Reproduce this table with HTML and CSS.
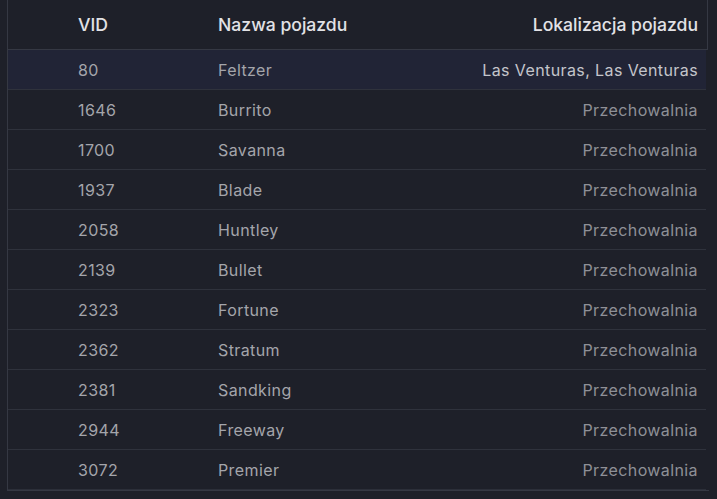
FILE: index.html
```html
<!DOCTYPE html>
<html lang="pl">
<head>
<meta charset="utf-8">
<title>Pojazdy</title>
<link rel="stylesheet" href="styles.css">
</head>
<body>
<div class="table">
  <div class="row head">
    <div class="c-vid">VID</div>
    <div class="c-name">Nazwa pojazdu</div>
    <div class="c-loc">Lokalizacja pojazdu</div>
  </div>
  <div class="body">
    <div class="row hover"><div class="c-vid">80</div><div class="c-name">Feltzer</div><div class="c-loc bright">Las Venturas, Las Venturas</div></div>
    <div class="row"><div class="c-vid">1646</div><div class="c-name">Burrito</div><div class="c-loc">Przechowalnia</div></div>
    <div class="row"><div class="c-vid">1700</div><div class="c-name">Savanna</div><div class="c-loc">Przechowalnia</div></div>
    <div class="row"><div class="c-vid">1937</div><div class="c-name">Blade</div><div class="c-loc">Przechowalnia</div></div>
    <div class="row"><div class="c-vid">2058</div><div class="c-name">Huntley</div><div class="c-loc">Przechowalnia</div></div>
    <div class="row"><div class="c-vid">2139</div><div class="c-name">Bullet</div><div class="c-loc">Przechowalnia</div></div>
    <div class="row"><div class="c-vid">2323</div><div class="c-name">Fortune</div><div class="c-loc">Przechowalnia</div></div>
    <div class="row"><div class="c-vid">2362</div><div class="c-name">Stratum</div><div class="c-loc">Przechowalnia</div></div>
    <div class="row"><div class="c-vid">2381</div><div class="c-name">Sandking</div><div class="c-loc">Przechowalnia</div></div>
    <div class="row"><div class="c-vid">2944</div><div class="c-name">Freeway</div><div class="c-loc">Przechowalnia</div></div>
    <div class="row"><div class="c-vid">3072</div><div class="c-name">Premier</div><div class="c-loc">Przechowalnia</div></div>
  </div>
</div>
</body>
</html>
```
FILE: styles.css
```css
html, body {
  margin: 0;
  padding: 0;
  background: #1e2029;
}
body {
  font-family: Inter, "Noto Sans", sans-serif;
  font-size: 16px;
  letter-spacing: 0.4px;
  color: #a4a5ab;
}
.table {
  margin-left: 7px;
  width: 701px;
  border-left: 1px solid #353843;
  border-bottom: 1px solid #353843;
}
.row {
  display: grid;
  grid-template-columns: 70px 140px 1fr auto;
  align-items: center;
  height: 39px;
  border-bottom: 1px solid #2f323c;
  width: 698px;
}
.row .c-vid { grid-column: 2; }
.row .c-name { grid-column: 3; }
.row .c-loc { grid-column: 4; text-align: right; padding-right: 8px; color: #8f9097; }
.row .c-loc.bright { color: #c4c5cb; }
.head {
  height: 49px;
  width: 699px;
  border-right: 1px solid #353843;
  border-bottom-color: #353843;
  color: #e2e2e6;
  font-size: 17.6px;
  font-weight: 500;
  letter-spacing: 0;
}
.head .c-loc { color: #e2e2e6; padding-right: 9px; }
.hover {
  background: #212436;
}
.body .row:last-child {
  border-bottom-color: #2c2f39;
}
```
